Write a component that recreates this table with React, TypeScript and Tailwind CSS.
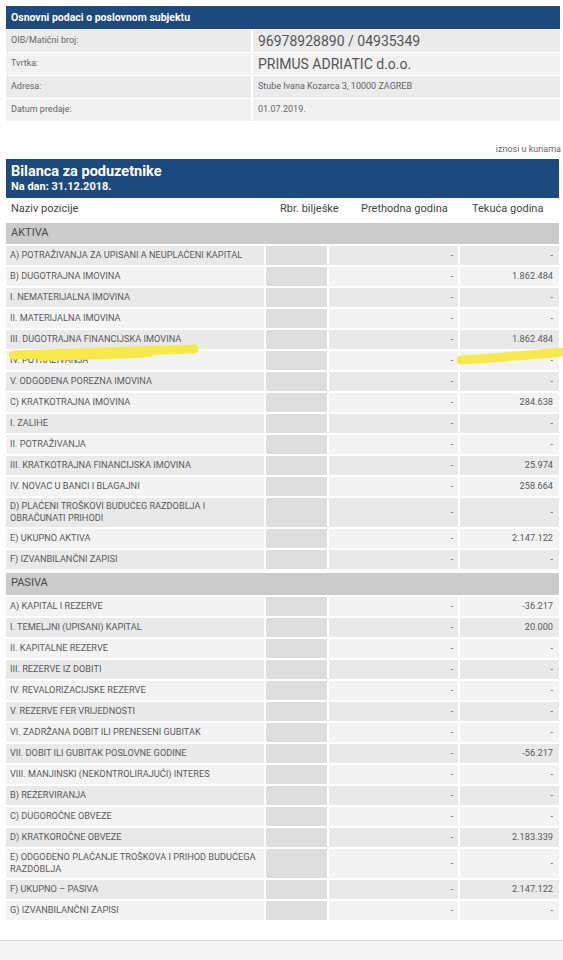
import React from 'react';

type Row = {label: string; prev: string; cur: string; tall?: boolean};

const aktiva: Row[] = [
	{label: 'A) POTRAŽIVANJA ZA UPISANI A NEUPLAĆENI KAPITAL', prev: '-', cur: '-'},
	{label: 'B) DUGOTRAJNA IMOVINA', prev: '-', cur: '1.862.484'},
	{label: 'I. NEMATERIJALNA IMOVINA', prev: '-', cur: '-'},
	{label: 'II. MATERIJALNA IMOVINA', prev: '-', cur: '-'},
	{label: 'III. DUGOTRAJNA FINANCIJSKA IMOVINA', prev: '-', cur: '1.862.484'},
	{label: 'IV. POTRAŽIVANJA', prev: '-', cur: '-'},
	{label: 'V. ODGOĐENA POREZNA IMOVINA', prev: '-', cur: '-'},
	{label: 'C) KRATKOTRAJNA IMOVINA', prev: '-', cur: '284.638'},
	{label: 'I. ZALIHE', prev: '-', cur: '-'},
	{label: 'II. POTRAŽIVANJA', prev: '-', cur: '-'},
	{label: 'III. KRATKOTRAJNA FINANCIJSKA IMOVINA', prev: '-', cur: '25.974'},
	{label: 'IV. NOVAC U BANCI I BLAGAJNI', prev: '-', cur: '258.664'},
	{label: 'D) PLAĆENI TROŠKOVI BUDUĆEG RAZDOBLJA I\nOBRAČUNATI PRIHODI', prev: '-', cur: '-', tall: true},
	{label: 'E) UKUPNO AKTIVA', prev: '-', cur: '2.147.122'},
	{label: 'F) IZVANBILANČNI ZAPISI', prev: '-', cur: '-'},
];

const pasiva: Row[] = [
	{label: 'A) KAPITAL I REZERVE', prev: '-', cur: '-36.217'},
	{label: 'I. TEMELJNI (UPISANI) KAPITAL', prev: '-', cur: '20.000'},
	{label: 'II. KAPITALNE REZERVE', prev: '-', cur: '-'},
	{label: 'III. REZERVE IZ DOBITI', prev: '-', cur: '-'},
	{label: 'IV. REVALORIZACIJSKE REZERVE', prev: '-', cur: '-'},
	{label: 'V. REZERVE FER VRIJEDNOSTI', prev: '-', cur: '-'},
	{label: 'VI. ZADRŽANA DOBIT ILI PRENESENI GUBITAK', prev: '-', cur: '-'},
	{label: 'VII. DOBIT ILI GUBITAK POSLOVNE GODINE', prev: '-', cur: '-56.217'},
	{label: 'VIII. MANJINSKI (NEKONTROLIRAJUĆI) INTERES', prev: '-', cur: '-'},
	{label: 'B) REZERVIRANJA', prev: '-', cur: '-'},
	{label: 'C) DUGOROČNE OBVEZE', prev: '-', cur: '-'},
	{label: 'D) KRATKOROČNE OBVEZE', prev: '-', cur: '2.183.339'},
	{label: 'E) ODGOĐENO PLAĆANJE TROŠKOVA I PRIHOD BUDUĆEGA\nRAZDOBLJA', prev: '-', cur: '-', tall: true},
	{label: 'F) UKUPNO – PASIVA', prev: '-', cur: '2.147.122'},
	{label: 'G) IZVANBILANČNI ZAPISI', prev: '-', cur: '-'},
];

const info = [
	{label: 'OIB/Matični broj:', value: '96978928890 / 04935349', big: true},
	{label: 'Tvrtka:', value: 'PRIMUS ADRIATIC d.o.o.', big: true},
	{label: 'Adresa:', value: 'Stube Ivana Kozarca 3, 10000 ZAGREB', big: false},
	{label: 'Datum predaje:', value: '01.07.2019.', big: false},
];

const cols = 'grid grid-cols-[258px_61px_129px_1fr] gap-x-[2px]';

const BalanceRow = ({row, dark}: {row: Row; dark: boolean}) => {
	const bg = dark ? 'bg-[#e9e9e9]' : 'bg-[#f3f3f3]';
	return (
		<div className={`${cols} mt-[2px] text-[9.2px] text-[#5a5a5a] ${row.tall ? 'h-[29px]' : 'h-[19px]'}`}>
			<div className={`flex items-center pl-[4px] leading-[12px] whitespace-pre-line ${bg}`}>{row.label}</div>
			<div className="bg-[#dedede]"/>
			<div className={`flex items-center justify-end pr-[5px] ${bg}`}>{row.prev}</div>
			<div className={`flex items-center justify-end pr-[6px] ${bg}`}>{row.cur}</div>
		</div>
	);
};

const Section = ({title, className = ''}: {title: string; className?: string}) => (
	<div className={`bg-[#cbcbcb] flex items-center pl-[5px] text-[11px] text-[#4a4a4a] ${className}`}>{title}</div>
);

export default function App() {
	return (
		<div className="relative w-[563px] h-[960px] bg-white overflow-hidden" style={{fontFamily: 'Roboto, "Liberation Sans", sans-serif'}}>
			<div className="pt-[6px] pl-[6px] pr-[3px]">
				<div className="h-[23px] bg-[#1c4a7f] flex items-center pl-[5px] text-white text-[10.5px] font-bold">
					Osnovni podaci o poslovnom subjektu
				</div>
				{info.map((r, i) => (
					<div key={r.label} className="grid grid-cols-[245px_1fr] gap-x-[2px] mt-[1px] h-[22px]">
						<div className={`flex items-center pl-[5px] text-[9px] text-[#666] ${i % 2 ? 'bg-[#f1f1f1]' : 'bg-[#ebebeb]'}`}>{r.label}</div>
						<div className={`flex items-center pl-[5px] ${r.big ? 'text-[14px] text-[#555]' : 'text-[9px] text-[#666]'} ${i % 2 ? 'bg-[#f1f1f1]' : 'bg-[#ebebeb]'}`}>{r.value}</div>
					</div>
				))}
			</div>

			<div className="mt-[22px] pr-[2px] text-right text-[9px] text-[#666]">iznosi u kunama</div>

			<div className="mt-[2px] ml-[6px] mr-[4px]">
				<div className="h-[39px] bg-[#1c4a7f] flex flex-col justify-center pl-[5px] text-white font-bold">
					<div className="text-[14.5px] leading-[17px]">Bilanca za poduzetnike</div>
					<div className="text-[11px] leading-[13px]">Na dan: 31.12.2018.</div>
				</div>
				<div className="h-[23px] flex items-center text-[11px] text-[#444]">
					<div className="w-[274px] pl-[5px]">Naziv pozicije</div>
					<div className="w-[81px]">Rbr. bilješke</div>
					<div className="w-[111px]">Prethodna godina</div>
					<div>Tekuća godina</div>
				</div>
				<Section title="AKTIVA" className="h-[21px] mt-[2px]"/>
				{aktiva.map((r, i) => <BalanceRow key={'a' + i} row={r} dark={i % 2 === 0}/>)}
				<Section title="PASIVA" className="h-[22px] mt-[4px]"/>
				{pasiva.map((r, i) => <BalanceRow key={'p' + i} row={r} dark={i % 2 === 1}/>)}
			</div>

			<div className="absolute left-0 right-0 bottom-0 h-[20px] bg-[#f4f4f4] border-t border-[#dcdcdc]"/>

			<svg className="absolute left-0 top-0 pointer-events-none" width="563" height="960">
				<path d="M13 355 C 60 353, 130 351, 194 349" stroke="#f7e94a" strokeWidth="9" strokeLinecap="round" fill="none"/>
				<path d="M40 358 C 80 357, 120 356, 150 354" stroke="#f7e94a" strokeWidth="6" strokeLinecap="round" fill="none"/>
				<path d="M461 360 C 490 358, 530 355, 561 352" stroke="#f7e94a" strokeWidth="9" strokeLinecap="round" fill="none"/>
			</svg>
		</div>
	);
}
